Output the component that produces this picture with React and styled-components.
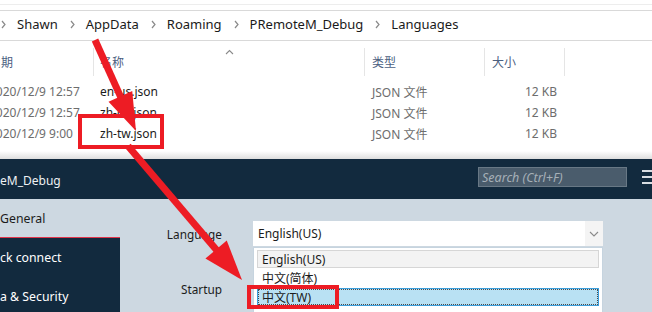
import React from 'react';
import styled, { createGlobalStyle } from 'styled-components';

const GlobalStyle = createGlobalStyle`
  html, body {
    margin: 0;
    padding: 0;
  }
  body {
    width: 652px;
    height: 312px;
    overflow: hidden;
    font-family: "Noto Sans", "Noto Sans CJK SC", sans-serif;
  }
  * {
    box-sizing: border-box;
  }
`;

const Page = styled.div`
  position: relative;
  width: 652px;
  height: 312px;
  overflow: hidden;
  display: flex;
  flex-direction: column;
`;

/* ---------- explorer ---------- */

const Explorer = styled.section`
  height: 159px;
  background: #fff;
  display: flex;
  flex-direction: column;
  flex-shrink: 0;
`;

const RibbonEdge = styled.div`
  margin-top: 4px;
  height: 7px;
  border-top: 1px solid #ededed;
  border-bottom: 1px solid #d9d9d9;
`;

const AddressBar = styled.div`
  height: 30px;
  border-bottom: 1px solid #d9d9d9;
  display: flex;
  align-items: center;
  padding: 0 0 3px 1px;
  font-size: 13px;
  color: #1a1a1a;
`;

const Crumb = styled.span`
  white-space: nowrap;
`;

const SepIcon = styled.svg`
  width: 5px;
  height: 9px;
  margin: 0 11px 0 12px;
  flex-shrink: 0;
  &:first-child {
    margin-left: 0;
  }
`;

const Sep = () => (
  <SepIcon viewBox="0 0 5 9">
    <path d="M1 1 L4 4.5 L1 8" fill="none" stroke="#8a8a8a" strokeWidth="1.2" />
  </SepIcon>
);

const HeaderRow = styled.div`
  margin-top: 7px;
  height: 28px;
  display: flex;
  font-size: 12px;
  color: #4c607f;
`;

const ColHead = styled.div`
  position: relative;
  width: ${({ w }) => w}px;
  border-right: 1px solid #e5e5e5;
  display: flex;
  align-items: center;
  padding-left: ${({ pl }) => pl || 0}px;
  white-space: nowrap;
  overflow: hidden;
`;

const ClippedText = styled.span`
  margin-left: ${({ shift }) => shift}px;
`;

const SortCaret = styled.svg`
  position: absolute;
  top: 1px;
  left: 131px;
  width: 9px;
  height: 6px;
`;

const Rows = styled.div`
  padding-top: 5px;
  display: flex;
  flex-direction: column;
`;

const DataRow = styled.div`
  height: 21px;
  display: flex;
  align-items: center;
  font-size: 12px;
  white-space: nowrap;
`;

const Cell = styled.div`
  width: ${({ w }) => w}px;
  display: flex;
  justify-content: ${({ right }) => (right ? 'flex-end' : 'flex-start')};
  padding-left: ${({ pl }) => pl || 0}px;
  padding-right: ${({ pr }) => pr || 0}px;
  color: ${({ dim }) => (dim ? '#6d6d6d' : '#1b1b1b')};
  overflow: hidden;
`;

const ExplorerShade = styled.div`
  margin-top: auto;
  height: 8px;
  background: linear-gradient(#ffffff, #dedede);
`;

/* ---------- app window ---------- */

const AppWindow = styled.section`
  flex: 1;
  display: flex;
  flex-direction: column;
  min-height: 0;
`;

const TitleBar = styled.header`
  height: 40px;
  flex-shrink: 0;
  background: #122a3e;
  display: flex;
  align-items: center;
  color: #eef1f4;
  font-size: 12px;
`;

const Title = styled.div`
  flex: 1;
  padding-top: 2px;
  white-space: nowrap;
`;

const SearchBox = styled.div`
  width: 149px;
  height: 20px;
  background: #4a5c6c;
  border: 1px solid #687885;
  display: flex;
  align-items: center;
  padding-left: 3px;
  font-size: 12.5px;
  font-style: italic;
  color: #a6b0b8;
  margin-top: -4px;
`;

const Hamburger = styled.div`
  margin-left: 15px;
  margin-right: -4px;
  width: 14px;
  display: flex;
  flex-direction: column;
  gap: 4px;
  margin-top: -4px;
  span {
    height: 2px;
    background: #d8dde2;
  }
`;

const Body = styled.div`
  flex: 1;
  display: flex;
  background: #cdd8e1;
  min-height: 0;
`;

const Sidebar = styled.nav`
  width: 120px;
  flex-shrink: 0;
  display: flex;
  flex-direction: column;
`;

const NavItem = styled.div`
  height: 39px;
  flex-shrink: 0;
  display: flex;
  align-items: center;
  font-size: 12.3px;
  white-space: nowrap;
  background: ${({ active }) => (active ? 'transparent' : '#122a3e')};
  color: ${({ active }) => (active ? '#1b1b1b' : '#ffffff')};
  border-bottom: ${({ active }) => (active ? '1px solid #e2344a' : 'none')};
`;

const Content = styled.div`
  flex: 1;
  position: relative;
  padding-top: 22px;
`;

const FormGrid = styled.div`
  display: grid;
  grid-template-columns: 102px 350px;
  column-gap: 31px;
  row-gap: 30px;
  align-items: center;
`;

const Label = styled.div`
  text-align: right;
  font-size: 11.8px;
  color: #1b1b1b;
`;

const Select = styled.div`
  height: 25px;
  background: #fff;
  display: flex;
  font-size: 12px;
  color: #1b1b1b;
`;

const SelectValue = styled.div`
  flex: 1;
  display: flex;
  align-items: center;
  padding-left: 5px;
`;

const SelectButton = styled.div`
  width: 18px;
  background: #f4f4f4;
  display: flex;
  align-items: center;
  justify-content: center;
`;

const DropList = styled.div`
  position: absolute;
  top: 48px;
  left: 133px;
  width: 350px;
  bottom: -20px;
  background: #fff;
  border: 1px solid #c6d4df;
  padding: 2px 3px;
  display: flex;
  flex-direction: column;
  gap: 1px;
  z-index: 2;
`;

const Option = styled.div`
  height: 18px;
  flex-shrink: 0;
  display: flex;
  align-items: center;
  padding-left: 4px;
  font-size: 12px;
  color: #1b1b1b;
  border: 1px solid
    ${({ state }) =>
      state === 'selected' ? '#3b9fdd' : state === 'hover' ? '#d6d6d6' : 'transparent'};
  background: ${({ state }) =>
    state === 'selected' ? '#b9e1f3' : state === 'hover' ? '#f3f3f3' : 'transparent'};
  outline: ${({ state }) => (state === 'selected' ? '1px dotted #4a4a4a' : 'none')};
  outline-offset: -2px;
`;

const Overlay = styled.svg`
  position: absolute;
  top: 0;
  left: 0;
  width: 652px;
  height: 312px;
  pointer-events: none;
  z-index: 10;
`;

const RED = '#ed1c24';

const Arrow = ({ x1, y1, x2, y2, head = 38, half = 13, width = 7 }) => {
  const dx = x2 - x1;
  const dy = y2 - y1;
  const len = Math.hypot(dx, dy);
  const ux = dx / len;
  const uy = dy / len;
  const bx = x2 - ux * head;
  const by = y2 - uy * head;
  const px = -uy * half;
  const py = ux * half;
  return (
    <g>
      <line x1={x1} y1={y1} x2={bx + ux * 2} y2={by + uy * 2} stroke={RED} strokeWidth={width} />
      <polygon points={`${x2},${y2} ${bx + px},${by + py} ${bx - px},${by - py}`} fill={RED} />
    </g>
  );
};

const files = [
  { date: '2020/12/9 12:57', name: 'en-us.json' },
  { date: '2020/12/9 12:57', name: 'zh-cn.json' },
  { date: '2020/12/9 9:00', name: 'zh-tw.json' },
];

const crumbs = ['Shawn', 'AppData', 'Roaming', 'PRemoteM_Debug', 'Languages'];

export default function App() {
  return (
    <>
      <GlobalStyle />
      <Page>
        <Explorer>
          <RibbonEdge />
          <AddressBar>
            {crumbs.map((c) => (
              <React.Fragment key={c}>
                <Sep />
                <Crumb>{c}</Crumb>
              </React.Fragment>
            ))}
          </AddressBar>
          <HeaderRow>
            <ColHead w={94}>
              <ClippedText shift={-11}>日期</ClippedText>
            </ColHead>
            <ColHead w={271} pl={6}>
              名称
              <SortCaret viewBox="0 0 9 6">
                <path d="M1 5 L4.5 1.5 L8 5" fill="none" stroke="#8a8a8a" strokeWidth="1.1" />
              </SortCaret>
            </ColHead>
            <ColHead w={120} pl={7}>类型</ColHead>
            <ColHead w={80} pl={7}>大小</ColHead>
          </HeaderRow>
          <Rows>
            {files.map((f) => (
              <DataRow key={f.name}>
                <Cell w={94} dim>
                  <ClippedText shift={-11}>{f.date}</ClippedText>
                </Cell>
                <Cell w={271} pl={6}>{f.name}</Cell>
                <Cell w={120} pl={7} dim>JSON 文件</Cell>
                <Cell w={80} right pr={8} dim>12 KB</Cell>
              </DataRow>
            ))}
          </Rows>
          <ExplorerShade />
        </Explorer>

        <AppWindow>
          <TitleBar>
            <Title>eM_Debug</Title>
            <SearchBox>Search (Ctrl+F)</SearchBox>
            <Hamburger>
              <span />
              <span />
              <span />
            </Hamburger>
          </TitleBar>
          <Body>
            <Sidebar>
              <NavItem active>General</NavItem>
              <NavItem>ck connect</NavItem>
              <NavItem>a &amp; Security</NavItem>
            </Sidebar>
            <Content>
              <FormGrid>
                <Label>Language</Label>
                <Select>
                  <SelectValue>English(US)</SelectValue>
                  <SelectButton>
                    <svg width="10" height="6" viewBox="0 0 10 6">
                      <path d="M1 1 L5 5 L9 1" fill="none" stroke="#8a8a8a" strokeWidth="1.1" />
                    </svg>
                  </SelectButton>
                </Select>
                <Label>Startup</Label>
                <Select>
                  <SelectValue />
                </Select>
              </FormGrid>
              <DropList>
                <Option state="hover">English(US)</Option>
                <Option>中文(简体)</Option>
                <Option state="selected">中文(TW)</Option>
              </DropList>
            </Content>
          </Body>
        </AppWindow>

        <Overlay viewBox="0 0 652 312">
          <rect x="80" y="116" width="82" height="31" fill="none" stroke={RED} strokeWidth="4" />
          <rect x="249" y="287" width="88" height="20" fill="none" stroke={RED} strokeWidth="4" />
          <Arrow x1={95} y1={40} x2={136} y2={131} />
          <Arrow x1={128} y1={146} x2={242} y2={280} head={40} half={14} />
        </Overlay>
      </Page>
    </>
  );
}
